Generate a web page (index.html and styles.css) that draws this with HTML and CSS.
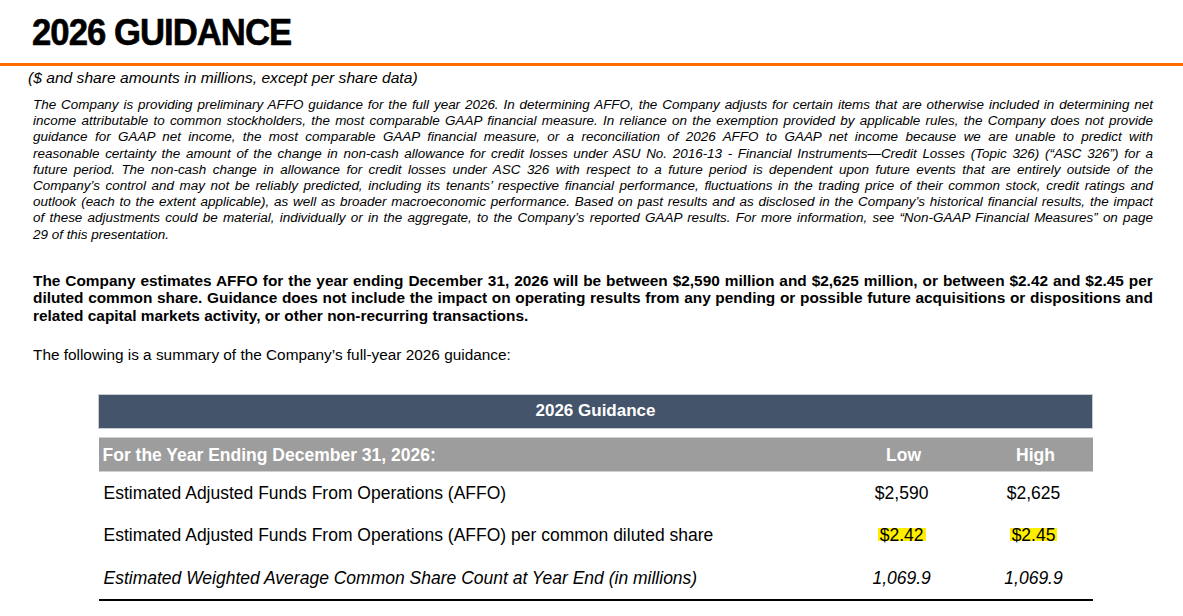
FILE: index.html
```html
<!DOCTYPE html>
<html lang="en">
<head>
<meta charset="utf-8">
<title>2026 Guidance</title>
<link rel="stylesheet" href="styles.css">
</head>
<body>
<header class="top">
  <h1 class="title"><span class="title-text">2026 GUIDANCE</span></h1>
</header>
<main class="content">
  <p class="units">($ and share amounts in millions, except per share data)</p>
  <p class="disclaimer">
    <span class="ln">The Company is providing preliminary AFFO guidance for the full year 2026. In determining AFFO, the Company adjusts for certain items that are otherwise included in determining net</span>
    <span class="ln">income attributable to common stockholders, the most comparable GAAP financial measure. In reliance on the exemption provided by applicable rules, the Company does not provide</span>
    <span class="ln">guidance for GAAP net income, the most comparable GAAP financial measure, or a reconciliation of 2026 AFFO to GAAP net income because we are unable to predict with</span>
    <span class="ln">reasonable certainty the amount of the change in non-cash allowance for credit losses under ASU No. 2016-13 - Financial Instruments—Credit Losses (Topic 326) (“ASC 326”) for a</span>
    <span class="ln">future period. The non-cash change in allowance for credit losses under ASC 326 with respect to a future period is dependent upon future events that are entirely outside of the</span>
    <span class="ln">Company’s control and may not be reliably predicted, including its tenants’ respective financial performance, fluctuations in the trading price of their common stock, credit ratings and</span>
    <span class="ln">outlook (each to the extent applicable), as well as broader macroeconomic performance. Based on past results and as disclosed in the Company’s historical financial results, the impact</span>
    <span class="ln">of these adjustments could be material, individually or in the aggregate, to the Company’s reported GAAP results. For more information, see “Non-GAAP Financial Measures” on page</span>
    <span class="ln last">29 of this presentation.</span>
  </p>
  <p class="estimate">
    <span class="ln">The Company estimates AFFO for the year ending December 31, 2026 will be between $2,590 million and $2,625 million, or between $2.42 and $2.45 per</span>
    <span class="ln">diluted common share. Guidance does not include the impact on operating results from any pending or possible future acquisitions or dispositions and</span>
    <span class="ln last">related capital markets activity, or other non-recurring transactions.</span>
  </p>
  <p class="summary">The following is a summary of the Company’s full-year 2026 guidance:</p>

  <table class="guidance">
    <colgroup>
      <col class="c-label">
      <col class="c-low">
      <col class="c-high">
    </colgroup>
    <thead>
      <tr class="row-title"><th colspan="3">2026 Guidance</th></tr>
      <tr class="row-spacer"><td colspan="3"></td></tr>
      <tr class="row-head">
        <th class="lbl">For the Year Ending December 31, 2026:</th>
        <th class="num">Low</th>
        <th class="num">High</th>
      </tr>
    </thead>
    <tbody>
      <tr>
        <td class="lbl">Estimated Adjusted Funds From Operations (AFFO)</td>
        <td class="num">$2,590</td>
        <td class="num">$2,625</td>
      </tr>
      <tr>
        <td class="lbl">Estimated Adjusted Funds From Operations (AFFO) per common diluted share</td>
        <td class="num"><span class="hl">$2.42</span></td>
        <td class="num"><span class="hl">$2.45</span></td>
      </tr>
      <tr class="row-italic">
        <td class="lbl">Estimated Weighted Average Common Share Count at Year End (in millions)</td>
        <td class="num">1,069.9</td>
        <td class="num">1,069.9</td>
      </tr>
    </tbody>
  </table>
</main>
</body>
</html>
```

FILE: styles.css
```css
* { box-sizing: border-box; }

html, body {
  margin: 0;
  padding: 0;
  background: #ffffff;
  color: #000000;
  font-family: "Liberation Sans", Arial, sans-serif;
}

.top {
  padding: 14px 0 12px 32px;
  border-bottom: 3px solid #ff6a00;
}

.title {
  margin: 0;
  font-size: 36px;
  line-height: 37px;
  font-weight: 700;
  height: 37px;
}

.title-text {
  display: inline-block;
  letter-spacing: -1px;
  transform: scaleX(0.963);
  transform-origin: left center;
  -webkit-text-stroke: 0.6px #000;
}

.content {
  padding: 0 30px 0 33px;
}

.units {
  margin: 4px 0 0 -5px;
  width: 1000px;
  font-size: 14px;
  line-height: 16px;
  font-style: italic;
  transform: scaleX(1.115);
  transform-origin: left top;
}

.disclaimer {
  margin: 11px 0 0 0;
  width: 1000px;
  font-size: 12px;
  line-height: 16.2px;
  font-style: italic;
  word-spacing: -3px;
  transform: scaleX(1.12);
  transform-origin: left top;
}

.ln {
  display: block;
  text-align: justify;
  text-align-last: justify;
}

.ln.last {
  text-align-last: left;
  word-spacing: normal;
}

.estimate {
  margin: 30px 0 0 0;
  width: 1018px;
  font-size: 14px;
  line-height: 17.5px;
  font-weight: 700;
  word-spacing: -3.5px;
  transform: scaleX(1.1);
  transform-origin: left top;
}

.summary {
  margin: 22px 0 0 0;
  width: 1000px;
  font-size: 14px;
  line-height: 17.5px;
  transform: scaleX(1.097);
  transform-origin: left top;
}

.guidance {
  margin: 29px 0 0 65px;
  width: 995px;
  border-collapse: collapse;
  font-size: 17.5px;
}

.c-label { width: 731px; }
.c-low { width: 150px; }
.c-high { width: 114px; }

.row-title th {
  height: 34px;
  background: #44546a;
  color: #ffffff;
  font-weight: 700;
  font-size: 17px;
  text-align: center;
  border: 1px solid #c8ccd2;
  padding: 0;
}

.row-spacer td {
  height: 9px;
  padding: 0;
}

.row-head th {
  height: 34px;
  background: #9d9d9d;
  color: #ffffff;
  font-weight: 700;
  font-size: 17.5px;
  border-top: 1px solid #d0d0d0;
  border-bottom: 1px solid #d0d0d0;
  padding: 2px 0 0 0;
}

.row-head th.lbl {
  text-align: left;
  padding-left: 4px;
}

tbody td {
  height: 43px;
  padding: 0;
}

tbody tr:last-child td {
  border-bottom: 2px solid #000000;
}

.lbl {
  text-align: left;
  padding-left: 5px;
}

.num {
  text-align: center;
}

td.num { padding-right: 4px; }

.row-italic td {
  font-style: italic;
}

.hl {
  background: linear-gradient(to bottom, transparent 0, transparent 3px, #ffee00 3px, #ffee00 16px, transparent 16px);
  padding: 0 2px;
}
```
